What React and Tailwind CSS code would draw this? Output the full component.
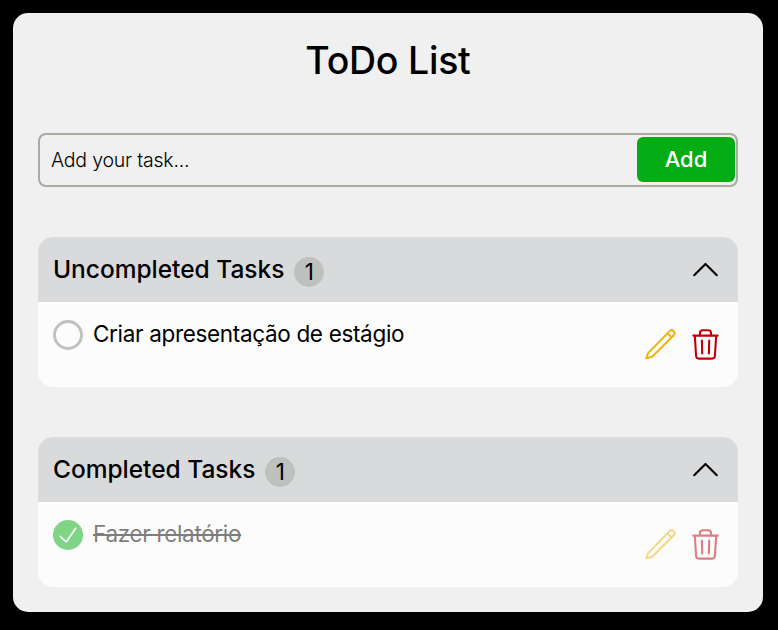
import React from "react";

function Chevron() {
  return (
    <svg className="block h-8 w-8" viewBox="0 0 32 32" fill="none" stroke="#000" strokeWidth="2.1" strokeLinecap="round" strokeLinejoin="round">
      <path d="M5.2 21.2 16.5 9.9 27.8 21.2" />
    </svg>
  );
}

function Pencil() {
  return (
    <svg className="block h-8 w-8" viewBox="0 0 32 32" fill="none" stroke="#f0b40f" strokeWidth="2" strokeLinecap="round" strokeLinejoin="round">
      <path d="M2.3 30.3 3.9 25.4 25.6 3.1a2.9 2.9 0 0 1 4.1 4.1L8.2 28.7Z" />
      <path d="M23.6 5.4 27.4 9.2" />
    </svg>
  );
}

function Trash() {
  return (
    <svg className="block h-8 w-8" viewBox="0 0 32 32" fill="none" stroke="#c00009" strokeWidth="2.1" strokeLinecap="round" strokeLinejoin="round">
      <path d="M4.3 7.6H28.7M5.8 7.6l1.3 20.4q.2 2.6 2.8 2.6H23.1q2.6 0 2.8-2.6L27.2 7.6" />
      <path d="M10.9 7.2V5.5Q10.9 2.2 13.9 2.2H19.1Q22.1 2.2 22.1 5.5V7.2M12.9 12.5 13.2 25.5M20.2 12.5 19.9 25.5" />
    </svg>
  );
}

function Section({ title, children }) {
  return (
    <section className="h-[150px] overflow-hidden rounded-[15px] bg-[#fcfcfc]">
      <header className="flex h-[65px] items-center bg-[#d9dadc] pr-[17px] pl-[15px]">
        <h2 className="-mt-0.5 text-[24.5px] leading-[30px] font-medium tracking-[-0.02px] whitespace-nowrap">{title}</h2>
        <span className="mt-[5px] ml-[10px] flex h-[30px] w-[30px] items-center justify-center rounded-full bg-[#bfc1be] text-[22.5px]">1</span>
        <div className="ml-auto">
          <Chevron />
        </div>
      </header>
      {children}
    </section>
  );
}

function Task({ done, children }) {
  return (
    <div className={"flex h-[85px] items-start pt-[18px] pr-[17px] pl-[15px] " + (done ? "opacity-50" : "")}>
      {done ? (
        <span className="h-[30px] w-[30px] rounded-full bg-[#04ad13]">
          <svg className="block h-[30px] w-[30px]" viewBox="0 0 30 30" fill="none" stroke="#fff" strokeWidth="1.6" strokeLinecap="round" strokeLinejoin="round">
            <path d="M7.3 16.4 13.2 22 22.7 8.2" />
          </svg>
        </span>
      ) : (
        <span className="h-[30px] w-[30px] rounded-full border-3 border-[#c1c1c1]" />
      )}
      {children}
      <div className="mt-2 ml-auto flex gap-[13px]">
        <Pencil />
        <Trash />
      </div>
    </div>
  );
}

export default function App() {
  return (
    <div className="h-[630px] w-[778px] bg-black p-[13px] font-['Inter',sans-serif] text-black">
      <main className="h-[599px] w-[750px] rounded-[15px] bg-[#f0f0f0] px-[25px] pt-[23px]">
        <h1 className="h-[97px] text-center text-[37.5px] leading-[50px] font-medium tracking-[-0.25px]">ToDo List</h1>
        <div className="flex h-[54px] items-start justify-between rounded-lg border-2 border-[#aaaa9f] pt-[2px] pr-px pl-[11px]">
          <span className="text-[19.5px] leading-[46px] font-light tracking-[-0.2px]">Add your task...</span>
          <button className="h-[45px] w-[98px] rounded-md bg-[#04ad13] text-[22px] font-medium text-white">Add</button>
        </div>
        <div className="mt-[50px] flex flex-col gap-[50px]">
          <Section title="Uncompleted Tasks">
            <Task>
              <span className="-mt-px ml-[10px] text-[22.5px] leading-[30px] tracking-[-0.33px] whitespace-nowrap">Criar apresentação de estágio</span>
            </Task>
          </Section>
          <Section title="Completed Tasks">
            <Task done>
              <span className="-mt-px ml-[10px] text-[22.5px] leading-[30px] tracking-[-0.33px] whitespace-nowrap line-through decoration-2">Fazer relatório</span>
            </Task>
          </Section>
        </div>
      </main>
    </div>
  );
}
